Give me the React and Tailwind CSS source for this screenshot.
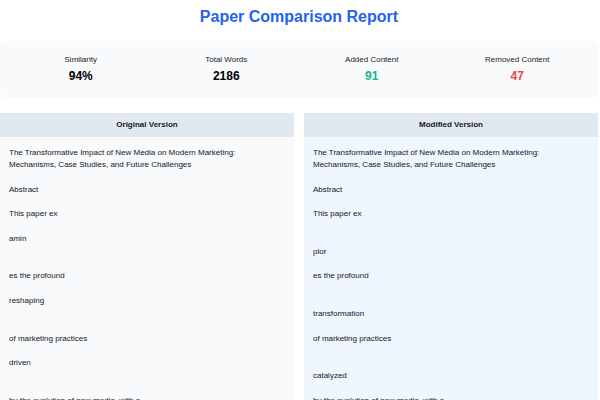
import React from "react";

const left = [
  "The Transformative Impact of New Media on Modern Marketing: Mechanisms, Case Studies, and Future Challenges",
  "Abstract",
  "This paper ex",
  "amin",
  "",
  "es the profound",
  "reshaping",
  "",
  "of marketing practices",
  "driven",
  "",
  "by the evolution of new media, with a",
];

const right = [
  "The Transformative Impact of New Media on Modern Marketing: Mechanisms, Case Studies, and Future Challenges",
  "Abstract",
  "This paper ex",
  "",
  "plor",
  "es the profound",
  "",
  "transformation",
  "of marketing practices",
  "",
  "catalyzed",
  "by the evolution of new media, with a",
];

function Stat({ label, value, color }) {
  return (
    <div className="flex flex-col items-center">
      <div className="text-[8px] leading-[12px] text-[#222222]">{label}</div>
      <div className={`mt-[2px] text-[12px] leading-[16px] font-bold ${color}`}>{value}</div>
    </div>
  );
}

function Panel({ title, items, bg }) {
  return (
    <div className="flex-1 flex flex-col">
      <div className="h-[24px] bg-[#e2e8f0] flex items-center justify-center text-[8px] font-bold text-[#111827]">
        {title}
      </div>
      <div className={`${bg} px-[9px] pt-[10px] pb-[20px] flex flex-col gap-[12.7px] text-[8px] leading-[12px] text-[#111827] h-[300px]`}>
        {items.map((t, i) => (
          <div key={i} className="w-[250px]">{t}</div>
        ))}
      </div>
    </div>
  );
}

export default function App() {
  return (
    <div
      className="w-[598px] h-[400px] overflow-hidden bg-white"
      style={{ fontFamily: '"Liberation Sans", Arial, sans-serif' }}
    >
      <h1 className="pt-[5px] h-[29px] text-center text-[16px] leading-[24px] font-bold text-[#2563eb]">
        Paper Comparison Report
      </h1>
      <div className="mt-[12px] h-[57px] bg-[#f8fafc] rounded-[6px] px-[8px] py-[13px] grid grid-cols-4">
        <Stat label="Similarity" value="94%" color="text-black" />
        <Stat label="Total Words" value="2186" color="text-black" />
        <Stat label="Added Content" value="91" color="text-[#10b981]" />
        <Stat label="Removed Content" value="47" color="text-[#ef4444]" />
      </div>
      <div className="mt-[15px] flex gap-[10px]">
        <Panel title="Original Version" items={left} bg="bg-[#f8fafc]" />
        <Panel title="Modified Version" items={right} bg="bg-[#eff6ff]" />
      </div>
    </div>
  );
}
